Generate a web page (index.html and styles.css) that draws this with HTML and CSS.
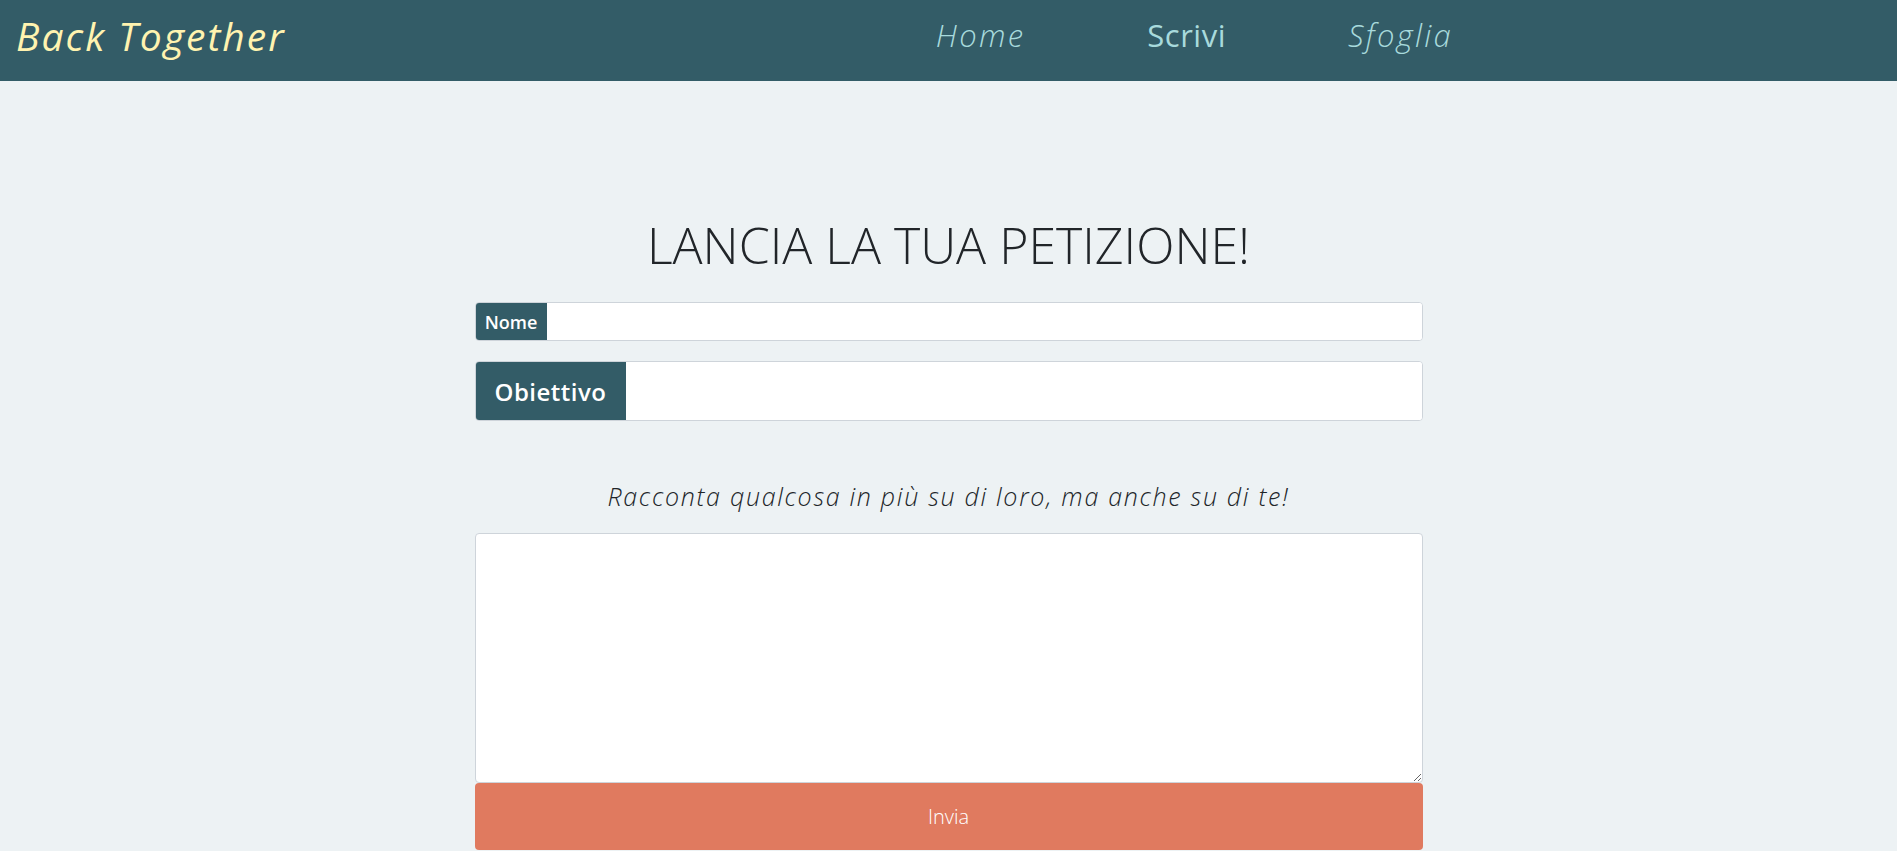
FILE: index.html
```html
<!DOCTYPE html>
<html lang="it">
<head>
<meta charset="utf-8">
<title>Back Together</title>
<link rel="stylesheet" href="styles.css">
</head>
<body>
<header class="nav">
  <a class="brand" href="#">Back Together</a>
  <nav class="links">
    <a class="link" href="#">Home</a>
    <a class="link active" href="#">Scrivi</a>
    <a class="link" href="#">Sfoglia</a>
  </nav>
</header>
<main class="page">
  <h1 class="title">LANCIA LA TUA PETIZIONE!</h1>
  <form class="form">
    <div class="group group-sm">
      <span class="label">Nome</span>
      <input class="control" type="text">
    </div>
    <div class="group group-lg">
      <span class="label">Obiettivo</span>
      <input class="control" type="text">
    </div>
    <p class="hint">Racconta qualcosa in più su di loro, ma anche su di te!</p>
    <textarea class="area"></textarea>
    <button class="send" type="button">Invia</button>
  </form>
</main>
</body>
</html>
```

FILE: styles.css
```css
* { box-sizing: border-box; }
html, body { margin: 0; padding: 0; }
body {
  background: #edf2f4;
  font-family: "Open Sans", "DejaVu Sans", sans-serif;
  color: #212529;
}
.nav {
  height: 81px;
  background: #335c67;
  display: flex;
  align-items: center;
  padding-left: 16px;
  padding-bottom: 11px;
}
.brand {
  color: #fff3b0;
  font-style: italic;
  font-size: 39px;
  text-decoration: none;
  letter-spacing: 2px;
}
.links {
  margin-left: auto;
  margin-right: 444px;
  display: flex;
  gap: 122px;
}
.link {
  color: #a8dadc;
  font-size: 31px;
  font-style: italic;
  font-weight: 300;
  text-decoration: none;
  letter-spacing: 2.3px;
}
.link.active {
  font-style: normal;
  font-weight: 500;
  letter-spacing: 0.5px;
}
.page {
  width: 948px;
  margin: 0 auto;
  padding-top: 134px;
}
.title {
  margin: 0 0 27px;
  text-align: center;
  font-weight: 300;
  font-size: 50px;
  line-height: 60px;
  color: #212529;
}
.form { display: flex; flex-direction: column; }
.group {
  display: flex;
  border: 1px solid #ced4da;
  border-radius: 4px;
  overflow: hidden;
  background: #fff;
}
.group-sm { height: 39px; }
.group-lg { height: 60px; margin-top: 20px; }
.label {
  background: #335c67;
  color: #fff;
  display: flex;
  align-items: center;
  justify-content: center;
  font-weight: 600;
}
.group-sm .label { width: 71px; font-size: 18px; }
.group-lg .label { width: 150px; font-size: 24px; letter-spacing: 0.5px; }
.control {
  flex: 1;
  border: 0;
  outline: none;
  background: #fff;
}
.hint {
  margin: 59px 0 21px;
  text-align: center;
  font-style: italic;
  font-weight: 300;
  font-size: 25px;
  line-height: 32px;
  letter-spacing: 1.7px;
}
.area {
  height: 250px;
  border: 1px solid #ced4da;
  border-radius: 4px;
  background: #fff;
  resize: vertical;
}
.send {
  height: 67px;
  border: 0;
  border-radius: 4px;
  background: #e07a5f;
  color: #fff;
  font-family: inherit;
  font-weight: 300;
  font-size: 20px;
}
```
